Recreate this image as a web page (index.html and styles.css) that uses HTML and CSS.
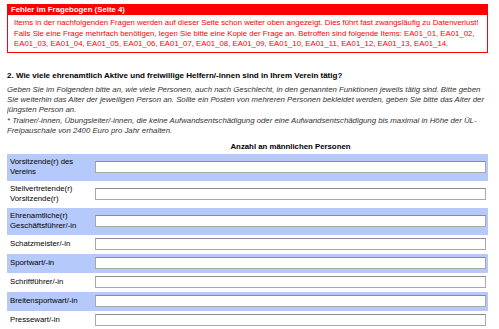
FILE: index.html
```html
<!DOCTYPE html>
<html lang="de">
  <head>
    <meta charset="UTF-8">
    <title>Fragebogen</title>
    <link rel="stylesheet" href="styles.css">
  </head>
  <body>
    <div class="error">
      <div class="error-head">Fehler im Fragebogen (Seite 4)</div>
      <div class="error-body">Items in der nachfolgenden Fragen werden auf dieser Seite schon weiter oben angezeigt. Dies führt fast zwangsläufig zu Datenverlust! Falls Sie eine Frage mehrfach benötigen, legen Sie bitte eine Kopie der Frage an. Betroffen sind folgende Items: EA01_01, EA01_02, EA01_03, EA01_04, EA01_05, EA01_06, EA01_07, EA01_08, EA01_09, EA01_10, EA01_11, EA01_12, EA01_13, EA01_14.</div>
    </div>

    <div class="question">
      <div class="title">2. Wie viele ehrenamtlich Aktive und freiwillige Helfern/-innen sind in Ihrem Verein tätig?</div>
      <p class="hint">Geben Sie im Folgenden bitte an, wie viele Personen, auch nach Geschlecht, in den genannten Funktionen jeweils tätig sind. Bitte geben Sie weiterhin das Alter der jeweiligen Person an. Sollte ein Posten von mehreren Personen bekleidet werden, geben Sie bitte das Alter der jüngsten Person an.</p>
      <p class="hint">* Trainer/-innen, Übungsleiter/-innen, die keine Aufwandsentschädigung oder eine Aufwandsentschädigung bis maximal in Höhe der ÜL-Freipauschale von 2400 Euro pro Jahr erhalten.</p>

      <table class="grid">
        <thead>
          <tr>
            <th></th>
            <th class="col-head">Anzahl an männlichen Personen</th>
          </tr>
        </thead>
        <tbody>
          <tr class="alt"><td class="label">Vorsitzende(r) des Vereins</td><td><input type="text"></td></tr>
          <tr><td class="label">Stellvertretende(r) Vorsitzende(r)</td><td><input type="text"></td></tr>
          <tr class="alt"><td class="label">Ehrenamtliche(r) Geschäftsführer/-in</td><td><input type="text"></td></tr>
          <tr><td class="label">Schatzmeister/-in</td><td><input type="text"></td></tr>
          <tr class="alt"><td class="label">Sportwart/-in</td><td><input type="text"></td></tr>
          <tr><td class="label">Schriftführer/-in</td><td><input type="text"></td></tr>
          <tr class="alt"><td class="label">Breitensportwart/-in</td><td><input type="text"></td></tr>
          <tr><td class="label">Pressewart/-in</td><td><input type="text"></td></tr>
        </tbody>
      </table>
    </div>
  </body>
</html>
```

FILE: styles.css
```css
:root {
  --font-body: "Liberation Sans", Arial, sans-serif;
  --color-red: #ff0000;
  --color-row: #b5c9fa;
  --color-txt: #000;
}

body {
  font-family: var(--font-body);
  font-size: 7.8px;
  color: var(--color-txt);
  background-color: #fff;
  margin: 4px 11px 0 7px;
}

.error {
  border: 1px solid var(--color-red);
}

.error-head {
  background-color: var(--color-red);
  color: #fff;
  font-weight: bold;
  line-height: 10px;
  padding: 0 3px;
}

.error-body {
  color: var(--color-red);
  line-height: 10.5px;
  padding: 3px 3px 2px 6px;
}

.question {
  margin-top: 18px;
}

.title {
  font-size: 8px;
  font-weight: bold;
  line-height: 10px;
  margin-bottom: 4px;
}

.hint {
  font-style: italic;
  color: #333;
  line-height: 10px;
  margin: 0 0 1px;
}

.grid {
  width: 100%;
  border-collapse: collapse;
  margin-top: 6px;
}

.col-head {
  font-weight: bold;
  text-align: center;
  line-height: 10px;
  padding: 0 0 2px;
}

.grid td {
  padding: 3px 2px 4px;
  line-height: 10px;
  vertical-align: middle;
}

.grid tr.alt td {
  background-color: var(--color-row);
}

.label {
  width: 81px;
  padding-left: 3px !important;
}

.grid input {
  display: block;
  box-sizing: border-box;
  width: 100%;
  height: 12px;
  margin: 0;
  padding: 0;
  border: 1px solid #a8a8a8;
  border-top-color: #8c8c8c;
  background: #fff;
}
```
